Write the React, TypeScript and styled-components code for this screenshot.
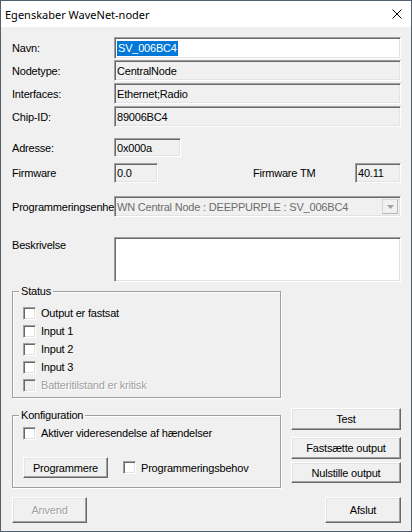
import styled, { createGlobalStyle, css } from "styled-components";

const GlobalStyle = createGlobalStyle`
  html, body {
    margin: 0;
    padding: 0;
    background: #f0f0f0;
  }
  * {
    box-sizing: border-box;
  }
`;

const sunken = css`
  border-style: solid;
  border-width: 1px;
  border-color: #a0a0a0 #ffffff #ffffff #a0a0a0;
  box-shadow: inset 1px 1px 0 #696969, inset -1px -1px 0 #e3e3e3;
`;

const raised = css`
  border-style: solid;
  border-width: 1px;
  border-color: #ffffff #696969 #696969 #ffffff;
  box-shadow: inset -1px -1px 0 #a0a0a0, inset 1px 1px 0 #e3e3e3;
`;

function App() {
  return (
    <>
      <GlobalStyle />
      <Window>
        <TitleBar>
          <Title>Egenskaber WaveNet-noder</Title>
          <CloseIcon width="10" height="10" viewBox="0 0 10 10">
            <path d="M0.5 0.5 L9.5 9.5 M9.5 0.5 L0.5 9.5" stroke="#000" strokeWidth="1" />
          </CloseIcon>
        </TitleBar>

        <Body>
          <Row $mt={0} $h={22}>
            <Label>Navn:</Label>
            <Field $bg="#fff">
              <Selected>SV_006BC4</Selected>
            </Field>
          </Row>
          <Row $mt={1} $h={21}>
            <Label>Nodetype:</Label>
            <Field>CentralNode</Field>
          </Row>
          <Row $mt={2} $h={21}>
            <Label>Interfaces:</Label>
            <Field>Ethernet;Radio</Field>
          </Row>
          <Row $mt={2} $h={21}>
            <Label>Chip-ID:</Label>
            <Field>89006BC4</Field>
          </Row>

          <Row $mt={11} $h={19}>
            <Label>Adresse:</Label>
            <Field $w={67}>0x000a</Field>
          </Row>
          <Row $mt={6} $h={20}>
            <Label>Firmware</Label>
            <Field $w={44}>0.0</Field>
            <RightPair>
              <Label>Firmware TM</Label>
              <Field $w={46}>40.11</Field>
            </RightPair>
          </Row>

          <Row $mt={13} $h={21}>
            <Label>Programmeringsenhed</Label>
            <Field $muted>
              <ComboText>WN Central Node : DEEPPURPLE : SV_006BC4</ComboText>
              <DropButton>
                <svg width="7" height="4" viewBox="0 0 7 4">
                  <path d="M0 0 H7 L3.5 4 Z" fill="#a0a0a0" />
                </svg>
              </DropButton>
            </Field>
          </Row>

          <Row $mt={20} $h={45} $top>
            <Label $pt={2}>Beskrivelse</Label>
            <Field $bg="#fff" />
          </Row>

          <Group $mt={3} $pt={6} $pb={3}>
            <Legend>Status</Legend>
            <CheckRow>
              <CheckBox />
              Output er fastsat
            </CheckRow>
            <CheckRow>
              <CheckBox />
              Input 1
            </CheckRow>
            <CheckRow>
              <CheckBox />
              Input 2
            </CheckRow>
            <CheckRow>
              <CheckBox />
              Input 3
            </CheckRow>
            <CheckRow $disabled>
              <CheckBox $disabled />
              Batteritilstand er kritisk
            </CheckRow>
          </Group>

          <BottomSection>
            <Group $mt={1} $pt={2} $pb={9}>
              <Legend>Konfiguration</Legend>
              <CheckRow>
                <CheckBox />
                Aktiver videresendelse af hændelser
              </CheckRow>
              <ProgRow>
                <Button $w={85} $h={21}>
                  Programmere
                </Button>
                <CheckRow>
                  <CheckBox />
                  Programmeringsbehov
                </CheckRow>
              </ProgRow>
            </Group>

            <SideButtons>
              <Button $w={110} $h={22}>
                Test
              </Button>
              <Button $w={110} $h={22} $mt={7}>
                Fastsætte output
              </Button>
              <Button $w={110} $h={21} $mt={3}>
                Nulstille output
              </Button>
            </SideButtons>
          </BottomSection>

          <Footer>
            <Button $w={75} $h={26} disabled>
              Anvend
            </Button>
            <Button $w={76} $h={26}>
              Afslut
            </Button>
          </Footer>
        </Body>
      </Window>
    </>
  );
}

export default App;

const Window = styled.div`
  width: 412px;
  height: 532px;
  display: flex;
  flex-direction: column;
  border: 1px solid #52606e;
  background: #f0f0f0;
  font-family: "Liberation Sans", Arial, sans-serif;
  font-size: 11px;
  letter-spacing: -0.2px;
  color: #000;
  overflow: hidden;
`;

const TitleBar = styled.div`
  height: 26px;
  flex: none;
  display: flex;
  align-items: center;
  padding-left: 4px;
  background: #fff;
`;

const Title = styled.span`
  font-family: "Noto Sans", "Open Sans", sans-serif;
  font-size: 11px;
  letter-spacing: 0;
  color: #000;
`;

const CloseIcon = styled.svg`
  margin-left: auto;
  margin-right: 9px;
  display: block;
`;

const Body = styled.div`
  flex: 1;
  display: flex;
  flex-direction: column;
  padding: 10px 10px 0 11px;
`;

const Row = styled.div<{ $mt: number; $h: number; $top?: boolean }>`
  display: flex;
  align-items: ${(p) => (p.$top ? "flex-start" : "center")};
  margin-top: ${(p) => p.$mt}px;
  height: ${(p) => p.$h}px;
  flex: none;
`;

const Label = styled.div<{ $pt?: number }>`
  width: 102px;
  flex: none;
  white-space: nowrap;
  overflow: hidden;
  padding-top: ${(p) => p.$pt ?? 0}px;
`;

const Field = styled.div<{ $w?: number; $bg?: string; $muted?: boolean }>`
  ${sunken};
  ${(p) => (p.$w ? `width: ${p.$w}px; flex: none;` : "flex: 1;")}
  height: 100%;
  display: flex;
  align-items: center;
  padding: 0 2px 0 2px;
  background: ${(p) => p.$bg ?? "#f0f0f0"};
  color: ${(p) => (p.$muted ? "#6d6d6d" : "#000")};
  white-space: nowrap;
  overflow: hidden;
`;

const Selected = styled.span`
  background: #0078d7;
  color: #fff;
  line-height: 15px;
  padding: 0 1px 0 1px;
`;

const RightPair = styled.div`
  margin-left: auto;
  display: flex;
  align-items: center;
  height: 100%;
`;

const ComboText = styled.span`
  flex: 1;
  overflow: hidden;
`;

const DropButton = styled.span`
  width: 16px;
  height: 15px;
  flex: none;
  display: flex;
  align-items: center;
  justify-content: center;
  border: 1px solid #d6d6d6;
  border-right-color: #b8b8b8;
  border-bottom-color: #b8b8b8;
  background: #f0f0f0;
`;

const Group = styled.fieldset<{ $mt: number; $pt: number; $pb: number }>`
  width: 269px;
  min-width: 0;
  flex: none;
  margin: ${(p) => p.$mt}px 0 0 0;
  padding: ${(p) => p.$pt}px 0 ${(p) => p.$pb}px 10px;
  border: 1px solid #a0a0a0;
  box-shadow: inset 1px 1px 0 #fff, 1px 1px 0 #fff;
`;

const Legend = styled.legend`
  margin-left: -4px;
  padding: 0 2px;
  line-height: 13px;
  background: #f0f0f0;
`;

const CheckRow = styled.div<{ $disabled?: boolean }>`
  display: flex;
  align-items: center;
  gap: 5px;
  height: 18px;
  color: ${(p) => (p.$disabled ? "#a0a0a0" : "#000")};
  text-shadow: ${(p) => (p.$disabled ? "1px 1px 0 #fff" : "none")};
`;

const CheckBox = styled.span<{ $disabled?: boolean }>`
  ${sunken};
  width: 13px;
  height: 13px;
  flex: none;
  background: ${(p) => (p.$disabled ? "#f0f0f0" : "#fff")};
`;

const ProgRow = styled.div`
  display: flex;
  align-items: center;
  gap: 15px;
  margin-top: 15px;
`;

const BottomSection = styled.div`
  display: flex;
  align-items: flex-start;
  margin-top: 10px;
`;

const SideButtons = styled.div`
  margin-left: auto;
  display: flex;
  flex-direction: column;
`;

const Footer = styled.div`
  display: flex;
  justify-content: space-between;
  margin-top: 9px;
`;

const Button = styled.button<{ $w: number; $h: number; $mt?: number }>`
  ${raised};
  width: ${(p) => p.$w}px;
  height: ${(p) => p.$h}px;
  margin-top: ${(p) => p.$mt ?? 0}px;
  padding: 0;
  flex: none;
  background: #f0f0f0;
  font-family: "Liberation Sans", Arial, sans-serif;
  font-size: 11px;
  letter-spacing: -0.2px;
  color: #000;
  &:disabled {
    color: #a0a0a0;
    text-shadow: 1px 1px 0 #fff;
  }
`;
